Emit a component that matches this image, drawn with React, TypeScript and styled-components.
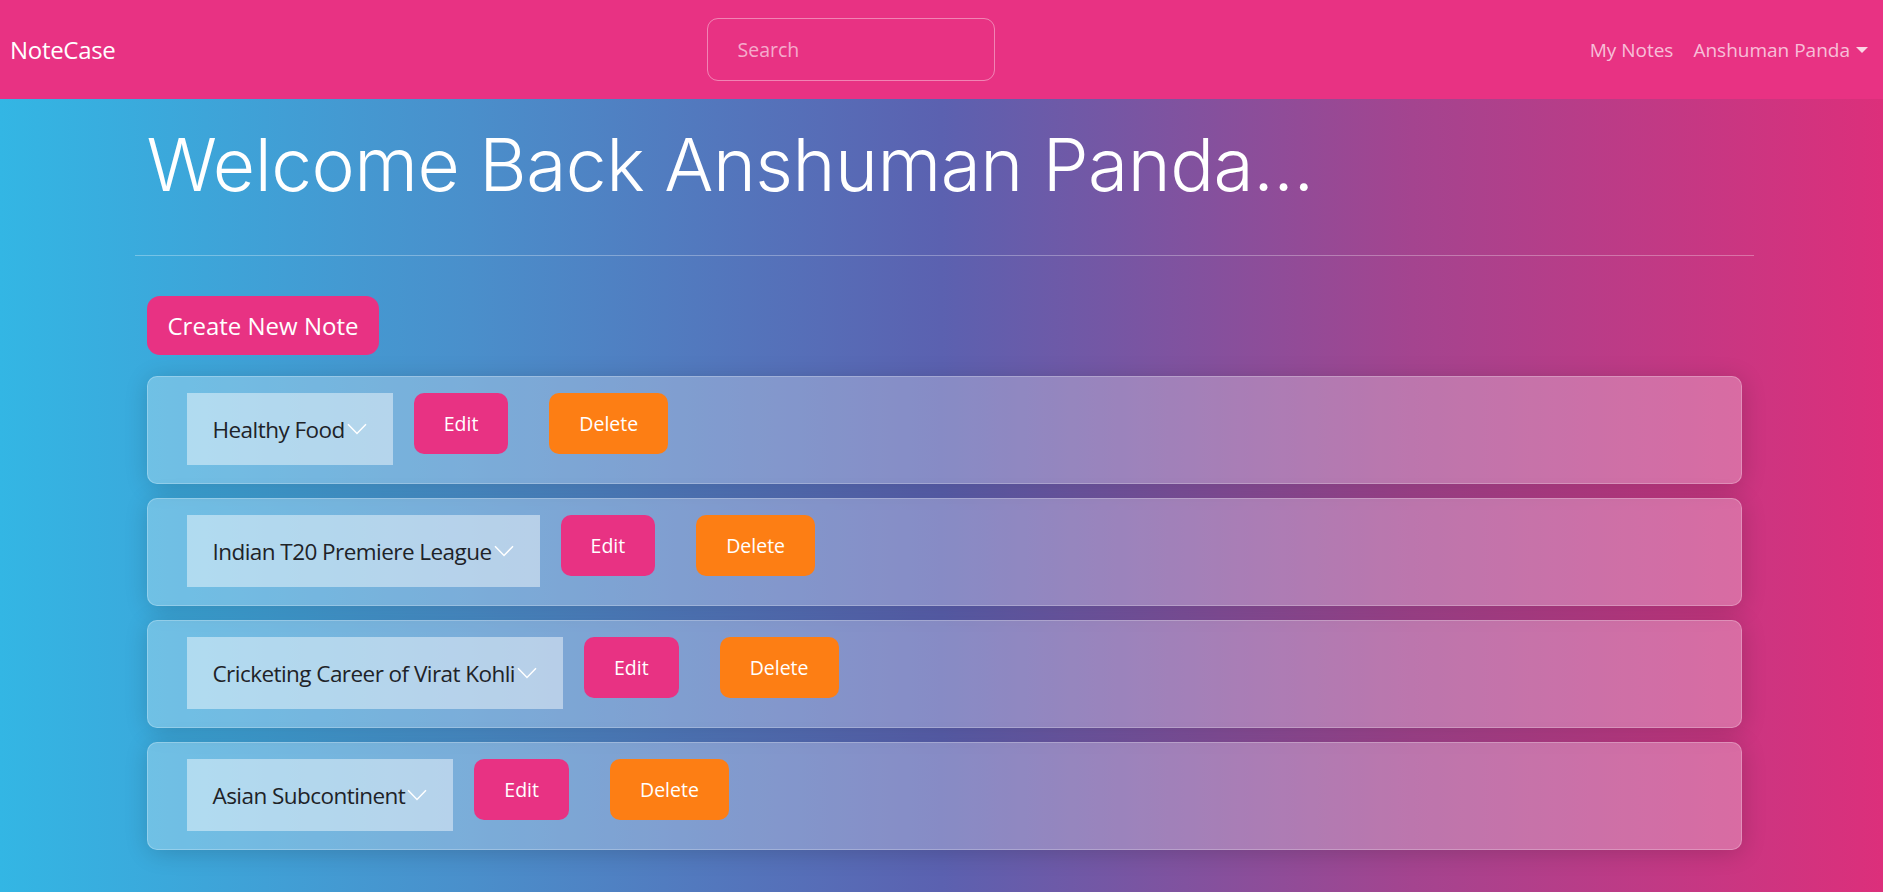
import React from "react";
import styled, { createGlobalStyle } from "styled-components";

const GlobalStyle = createGlobalStyle`
  html, body, #root { margin: 0; padding: 0; }
  html { min-height: 100%; }
  body {
    min-height: 100vh;
    font-family: "Open Sans", "Noto Sans", sans-serif;
    color: #fff;
    background: linear-gradient(90deg, #33b6e4 0%, #4a8fcb 25%, #5b61b0 50%, #a4448f 75%, #dc2f7b 100%);
  }
  * { box-sizing: border-box; }
`;

const Navbar = styled.nav`
  height: 99px;
  background: #e83283;
  display: flex;
  align-items: center;
  padding: 0 5px 0 10px;
`;

const Brand = styled.a`
  font-size: 24px;
  color: #fff;
  margin-right: 20px;
  letter-spacing: -0.3px;
  white-space: nowrap;
`;

const SearchWrap = styled.div`
  flex: 1;
  display: flex;
  justify-content: center;
  padding-right: 14px;
`;

const SearchInput = styled.input`
  width: 288px;
  height: 63px;
  border: 1px solid rgba(255, 255, 255, 0.4);
  border-radius: 11px;
  background: transparent;
  color: #fff;
  font-family: inherit;
  font-size: 19.5px;
  padding: 0 30px;
  outline: none;
  &::placeholder { color: rgba(255, 255, 255, 0.6); }
`;

const NavLinks = styled.div`
  display: flex;
  align-items: center;
`;

const NavLink = styled.a`
  color: rgba(255, 255, 255, 0.7);
  font-size: 19px;
  padding: 0 10px;
  display: flex;
  align-items: center;
  white-space: nowrap;
`;

const Caret = styled.span`
  display: inline-block;
  margin-left: 6px;
  border-top: 6px solid rgba(255, 255, 255, 0.8);
  border-left: 6px solid transparent;
  border-right: 6px solid transparent;
`;

const Container = styled.main`
  width: 1619px;
  margin-left: calc(50% - 807px);
  padding-top: 20px;
`;

const Heading = styled.h1`
  margin: 0;
  padding: 0 12px;
  font-family: "Inter", sans-serif;
  font-weight: 300;
  font-size: 73px;
  line-height: 92px;
  letter-spacing: -0.5px;
  color: #fff;
`;

const Rule = styled.hr`
  margin: 44px 0 0;
  border: none;
  border-top: 1px solid rgba(255, 255, 255, 0.3);
`;

const Page = styled.section`
  padding: 40px 12px 0;
  display: flex;
  flex-direction: column;
  align-items: flex-start;
`;

const CreateButton = styled.button`
  height: 59px;
  padding: 0 21px;
  border: none;
  border-radius: 13px;
  background: #e83283;
  color: #fff;
  font-family: inherit;
  font-size: 24px;
  margin-bottom: 21px;
`;

const NoteList = styled.div`
  align-self: stretch;
  display: flex;
  flex-direction: column;
  gap: 14px;
`;

const Card = styled.div`
  height: 108px;
  border: 1px solid rgba(255, 255, 255, 0.25);
  border-radius: 10px;
  background: rgba(255, 255, 255, 0.27);
  box-shadow: 1px 3px 24px -1px rgba(0, 0, 0, 0.18);
  padding: 16px 0 0 39px;
  display: flex;
  align-items: flex-start;
`;

const Toggle = styled.div`
  height: 72px;
  padding: 0 26px 0 26px;
  background: rgba(255, 255, 255, 0.45);
  color: #1e2328;
  font-size: 22.5px;
  letter-spacing: -0.55px;
  display: flex;
  align-items: center;
  margin-right: 21px;
  white-space: nowrap;
`;

const Chevron = styled.svg`
  width: 20px;
  height: 12px;
  margin-left: 2px;
  flex-shrink: 0;
`;

const ActionButton = styled.button<{ $variant: "edit" | "delete" }>`
  height: 61px;
  padding: 0 30px;
  border: none;
  border-radius: 10px;
  background: ${(p) => (p.$variant === "edit" ? "#e83283" : "#fd7e14")};
  color: #fff;
  font-family: inherit;
  font-size: 19.5px;
  margin-left: ${(p) => (p.$variant === "delete" ? "41px" : "0")};
`;

const notes = [
  "Healthy Food",
  "Indian T20 Premiere League",
  "Cricketing Career of Virat Kohli",
  "Asian Subcontinent",
];

export default function App() {
  return (
    <>
      <GlobalStyle />
      <Navbar>
        <Brand>NoteCase</Brand>
        <SearchWrap>
          <SearchInput placeholder="Search" />
        </SearchWrap>
        <NavLinks>
          <NavLink>My Notes</NavLink>
          <NavLink>
            Anshuman Panda
            <Caret />
          </NavLink>
        </NavLinks>
      </Navbar>
      <Container>
        <Heading>Welcome Back Anshuman Panda...</Heading>
        <Rule />
        <Page>
          <CreateButton>Create New Note</CreateButton>
          <NoteList>
            {notes.map((n) => (
              <Card key={n}>
                <Toggle>
                  {n}
                  <Chevron viewBox="0 0 20 12" fill="none">
                    <path d="M1 1.2l9 9.3 9-9.3" stroke="#fff" strokeWidth="1.5" />
                  </Chevron>
                </Toggle>
                <ActionButton $variant="edit">Edit</ActionButton>
                <ActionButton $variant="delete">Delete</ActionButton>
              </Card>
            ))}
          </NoteList>
        </Page>
      </Container>
    </>
  );
}
